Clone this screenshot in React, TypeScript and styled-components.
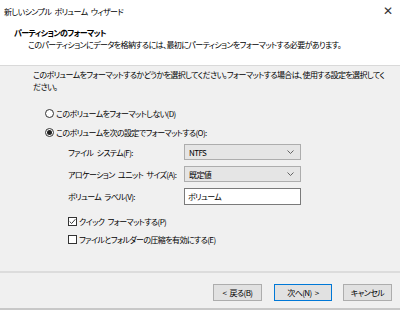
import styled, { createGlobalStyle } from "styled-components";

const Global = createGlobalStyle`
  html, body {
    margin: 0;
    padding: 0;
    background: #f0f0f0;
  }
  * {
    box-sizing: border-box;
  }
`;

const Window = styled.div`
  width: 400px;
  height: 310px;
  display: flex;
  flex-direction: column;
  background: #f0f0f0;
  font-family: "Noto Sans CJK JP", "Liberation Sans", sans-serif;
  font-size: 8px;
  letter-spacing: -0.6px;
  word-spacing: 2px;
  font-feature-settings: "palt";
  color: #000;
  border-bottom: 2px solid #c8c8c8;
`;

const TitleBar = styled.div`
  height: 22px;
  background: #fff;
  display: flex;
  align-items: center;
  justify-content: space-between;
  padding: 0 8px 0 4px;
`;

const CloseGlyph = styled.span`
  font-size: 12px;
  color: #333;
  font-family: "DejaVu Sans", sans-serif;
  font-weight: 300;
`;

const Header = styled.div`
  height: 44px;
  background: #fff;
  padding: 5px 0 0 14px;
  border-bottom: 1px solid #d9d9d9;
  line-height: 12px;
`;

const HeaderTitle = styled.div`
  font-weight: bold;
`;

const HeaderSub = styled.div`
  padding-left: 14px;
`;

const Body = styled.div`
  flex: 1;
  padding: 3px 0 0 33px;
  display: flex;
  flex-direction: column;
`;

const Lead = styled.p`
  margin: 0;
  line-height: 12px;
  white-space: nowrap;
`;

const Choice = styled.label<{ $top: number; $indent: number }>`
  display: flex;
  align-items: center;
  gap: 2px;
  height: 12px;
  margin-top: ${(p) => p.$top}px;
  margin-left: ${(p) => p.$indent}px;
  white-space: nowrap;
`;

const RadioDot = styled.span<{ $on?: boolean }>`
  width: 9px;
  height: 9px;
  border-radius: 50%;
  border: 1px solid #333;
  background: #fff;
  display: flex;
  align-items: center;
  justify-content: center;
  &::after {
    content: "";
    width: 5px;
    height: 5px;
    border-radius: 50%;
    background: ${(p) => (p.$on ? "#222" : "transparent")};
  }
`;

const Box = styled.span`
  width: 9px;
  height: 9px;
  border: 1px solid #333;
  background: #fff;
  display: flex;
  align-items: center;
  justify-content: center;
`;

const Form = styled.div`
  margin: 6px 0 0 35px;
  display: grid;
  grid-template-columns: 116px 117px;
  row-gap: 6px;
  align-items: center;
`;

const FieldLabel = styled.span`
  white-space: nowrap;
`;

const Select = styled.div`
  height: 16px;
  background: #e5e5e5;
  border: 1px solid #adadad;
  display: flex;
  align-items: center;
  justify-content: space-between;
  padding: 0 6px 0 4px;
`;

const TextField = styled.div`
  height: 17px;
  background: #fff;
  border: 1px solid #7a7a7a;
  padding: 0 3px;
  display: flex;
  align-items: center;
`;

const Footer = styled.div`
  height: 37px;
  border-top: 2px solid #dcdcdc;
  display: flex;
  justify-content: flex-end;
  align-items: flex-start;
  padding: 11px 8px 0 0;
`;

const Button = styled.div<{ $primary?: boolean; $gap: number }>`
  height: 17px;
  width: ${(p) => (p.$primary ? 58 : 49)}px;
  margin-left: ${(p) => p.$gap}px;
  background: #e1e1e1;
  border: 1px solid ${(p) => (p.$primary ? "#0078d7" : "#adadad")};
  display: flex;
  align-items: center;
  justify-content: center;
  white-space: nowrap;
`;

const Chevron = () => (
  <svg width="7" height="4" viewBox="0 0 7 4">
    <path d="M0.5 0.5 L3.5 3.5 L6.5 0.5" fill="none" stroke="#555" strokeWidth="0.9" />
  </svg>
);

const Tick = () => (
  <svg width="8" height="7" viewBox="0 0 8 7">
    <path d="M0.8 3.6 L3 5.8 L7.3 0.9" fill="none" stroke="#222" strokeWidth="1" />
  </svg>
);

export default function App() {
  return (
    <Window>
      <Global />
      <TitleBar>
        <span>新しいシンプル ボリューム ウィザード</span>
        <CloseGlyph>✕</CloseGlyph>
      </TitleBar>
      <Header>
        <HeaderTitle>パーティションのフォーマット</HeaderTitle>
        <HeaderSub>
          このパーティションにデータを格納するには、最初にパーティションをフォーマットする必要があります。
        </HeaderSub>
      </Header>
      <Body>
        <Lead>
          このボリュームをフォーマットするかどうかを選択してください。フォーマットする場合は、使用する設定を選択してく
          <br />
          ださい。
        </Lead>
        <Choice $top={14} $indent={12}>
          <RadioDot />
          このボリュームをフォーマットしない(D)
        </Choice>
        <Choice $top={7} $indent={12}>
          <RadioDot $on />
          このボリュームを次の設定でフォーマットする(O):
        </Choice>
        <Form>
          <FieldLabel>ファイル システム(F):</FieldLabel>
          <Select>
            <span>NTFS</span>
            <Chevron />
          </Select>
          <FieldLabel>アロケーション ユニット サイズ(A):</FieldLabel>
          <Select>
            <span>既定値</span>
            <Chevron />
          </Select>
          <FieldLabel>ボリューム ラベル(V):</FieldLabel>
          <TextField>ボリューム</TextField>
        </Form>
        <Choice $top={10} $indent={35}>
          <Box>
            <Tick />
          </Box>
          クイック フォーマットする(P)
        </Choice>
        <Choice $top={6} $indent={35}>
          <Box />
          ファイルとフォルダーの圧縮を有効にする(E)
        </Choice>
      </Body>
      <Footer>
        <Button $gap={0}>&lt; 戻る(B)</Button>
        <Button $gap={12} $primary>
          次へ(N) &gt;
        </Button>
        <Button $gap={11}>キャンセル</Button>
      </Footer>
    </Window>
  );
}
